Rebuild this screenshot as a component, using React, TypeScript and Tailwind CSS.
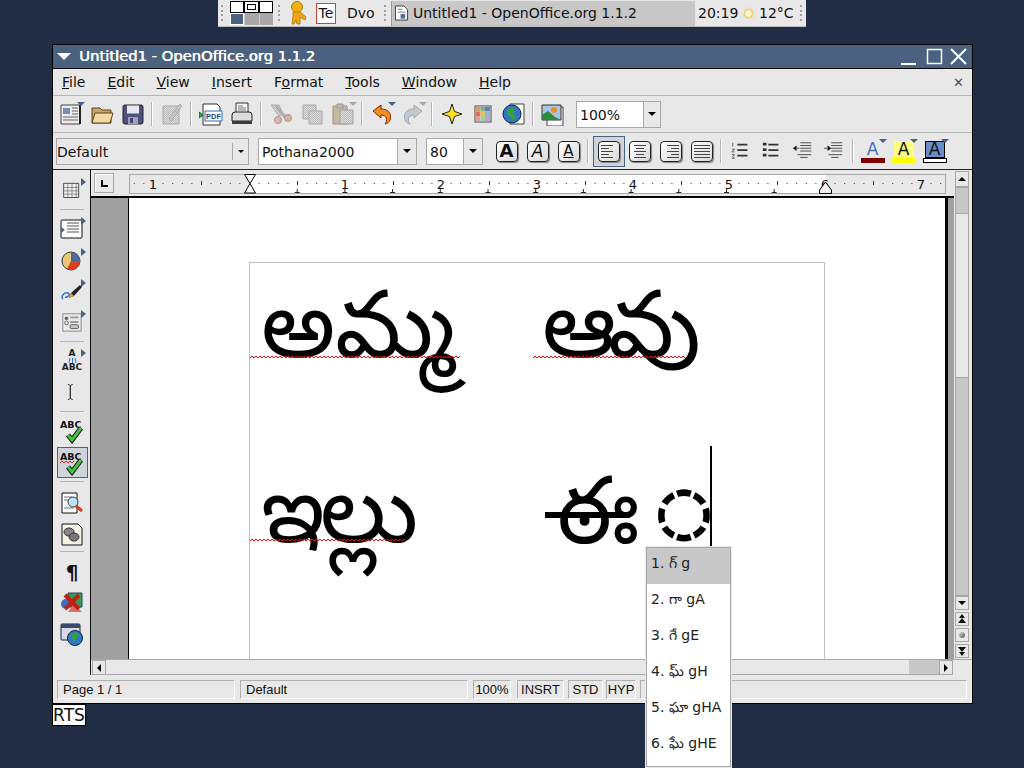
import type { ReactNode } from 'react';

const Sep = () => (
  <div className="w-2 h-6 flex justify-center shrink-0">
    <div className="w-[2px] h-full bg-[#b4b4b4] border-r border-white" />
  </div>
);

const Handle = ({ className = '' }: { className?: string }) => (
  <div className={`w-[5px] h-4 flex flex-col justify-between shrink-0 ${className}`}>
    {[0, 1, 2, 3].map(i => (
      <div key={i} className="w-0.5 h-0.5 bg-[#a0a0a0]" />
    ))}
  </div>
);

const Cell = ({ children, w = 'w-[31px]', h = 'h-[30px]' }: { children: ReactNode; w?: string; h?: string }) => (
  <div className={`${w} ${h} flex items-center justify-center relative shrink-0`}>{children}</div>
);

const Corner = ({ off }: { off?: boolean }) => (
  <div className={`absolute right-[1px] top-[3px] w-0 h-0 border-l-4 border-r-4 border-t-4 border-l-transparent border-r-transparent ${off ? 'border-t-[#a8a8a8]' : 'border-t-[#4a6180]'}`} />
);

const Side = () => (
  <div className="absolute right-[1px] top-1 w-0 h-0 border-t-4 border-b-4 border-l-[5px] border-t-transparent border-b-transparent border-l-[#4a6180]" />
);

const Icon = ({ children, size = 24 }: { children: ReactNode; size?: number }) => (
  <svg width={size} height={size} viewBox="0 0 24 24" fill="none">
    {children}
  </svg>
);

const NewDoc = () => (
  <Icon>
    <path d="M2 3h19v19H2z" fill="#ececec" stroke="#444" />
    <path d="M21 3v19" stroke="#222" strokeWidth="2" />
    <path d="M4 6h7v6H4z" fill="#7c8fb0" />
    <path d="M13 6h6M13 9h6M13 12h6M4 15h15M4 18h15" stroke="#666" />
  </Icon>
);
const Folder = () => (
  <Icon>
    <path d="M2 6h8l2 2h9v13H2z" fill="#c8a468" stroke="#5a4520" />
    <path d="M2 21l3-10h18l-3 10z" fill="#f3d8a4" stroke="#5a4520" />
  </Icon>
);
const Save = () => (
  <Icon>
    <rect x="2" y="3" width="20" height="19" rx="2" fill="#50507e" stroke="#222" />
    <path d="M6 3.500h12v8H6z" fill="#e8e8f0" />
    <path d="M7 15h10v7H7z" fill="#a0a0c4" />
    <path d="M9 16h3v5H9z" fill="#44446c" />
  </Icon>
);
const EditDoc = () => (
  <Icon>
    <path d="M3 4h16v18H3z" fill="url(#dither)" stroke="#aaa" />
    <path d="M9 17L20 2l2 2-11 15z" fill="#c8c8c8" stroke="#a8a8a8" />
  </Icon>
);
const Pdf = () => (
  <svg width="24" height="24" viewBox="0 0 24 24" fill="none">
    <path d="M4 2h14l3 3v18H4z" fill="#fff" stroke="#333" />
    <path d="M6 9h17v10H6z" fill="#fff" stroke="#2c6eb0" />
    <path d="M0 10l4 3-4 3z" fill="#2db52d" stroke="#156015" />
    <text x="7" y="17" fontSize="7.5" fontFamily="Liberation Sans" fontWeight="bold" fill="#24487c">PDF</text>
  </svg>
);
const Printer = () => (
  <Icon>
    <path d="M6 1h12v11H6z" fill="#f5f5f5" stroke="#333" />
    <path d="M8 4h5M8 6h8M8 8h8" stroke="#777" />
    <path d="M2 13q0-3 3-3h14q3 0 3 3v6H2z" fill="#dcdcdc" stroke="#222" />
    <path d="M2 19h20v3H2z" fill="#3c3c3c" />
  </Icon>
);
const Cut = () => (
  <Icon>
    <path d="M2 3h8l4 9-4 2z" fill="url(#dither)" stroke="#aaa" />
    <path d="M7 4l9 11" stroke="#b0b0b0" strokeWidth="3" />
    <circle cx="9" cy="18" r="3.500" fill="#d8b8b0" stroke="#b09088" />
    <circle cx="19" cy="16" r="3.500" fill="#d8b0a0" stroke="#b09088" />
  </Icon>
);
const Copy = () => (
  <Icon>
    <path d="M3 3h13v14H3z" fill="url(#dither)" stroke="#a8a8a8" />
    <path d="M9 9h13v13H9z" fill="url(#dither)" stroke="#a8a8a8" />
  </Icon>
);
const Paste = () => (
  <Icon>
    <path d="M2 4h14v18H2z" fill="#c8b8a0" stroke="#a09080" />
    <path d="M6 2h6v4H6z" fill="#bbb" stroke="#999" />
    <path d="M9 8h13v14H9z" fill="url(#dither)" stroke="#a0a0a0" />
  </Icon>
);
const Undo = () => (
  <Icon>
    <path d="M3 9l8-6v4c7 0 11 4 9 11-1 2-3 4-5 4 3-4 2-9-4-9v3z" fill="#f09020" stroke="#902000" />
  </Icon>
);
const Redo = () => (
  <Icon>
    <path d="M21 9l-8-6v4C6 7 2 11 4 18c1 2 3 4 5 4-3-4-2-9 4-9v3z" fill="#c0c8d0" stroke="#a0a8b0" />
  </Icon>
);
const Star = () => (
  <Icon>
    <path d="M12 2l2.500 7.500L22 12l-7.500 2.500L12 22l-2.500-7.500L2 12l7.500-2.500z" fill="#ffe020" stroke="#222" />
  </Icon>
);
const Palette = () => (
  <Icon>
    <rect x="4" y="4" width="16" height="16" fill="#fff" stroke="#444" />
    <path d="M5 5h4.500v4.500H5z" fill="#d0a060" />
    <path d="M9.500 5H14v4.500H9.500z" fill="#80b080" />
    <path d="M14 5h5v4.500h-5z" fill="#6080c0" />
    <path d="M5 9.500h4.500V14H5z" fill="#e07060" />
    <path d="M9.500 9.500H14V14H9.500z" fill="#e0c060" />
    <path d="M14 9.500h5V14h-5z" fill="#80c0d0" />
    <path d="M5 14h4.500v5H5z" fill="#e0a0a0" />
    <path d="M9.500 14H14v5H9.500z" fill="#a0d0a0" />
    <path d="M14 14h5v5h-5z" fill="#c0a0d0" />
  </Icon>
);
const Globe = () => (
  <Icon>
    <path d="M8 2h14v20H8z" fill="#fff" stroke="#444" />
    <circle cx="10" cy="12" r="9" fill="#2f78c8" stroke="#123" />
    <path d="M5 8l5-3 3 3-2 4 3 3-3 4-2-4-4-2z" fill="#38a038" />
  </Icon>
);
const Picture = () => (
  <Icon>
    <path d="M6 5h16v19H6z" fill="#fff" stroke="#444" />
    <path d="M1 3h19v15H1z" fill="#a8c4e8" stroke="#333" />
    <circle cx="13" cy="8" r="3" fill="#f09020" />
    <path d="M1 18v-5l6-4 7 6 6 3z" fill="#2e8a3a" />
  </Icon>
);

const Combo = ({ text, inputW, btnW = 'w-[19px]' }: { text: string; inputW: string; btnW?: string }) => (
  <div className="flex h-[27px] border border-[#a8a8a8] shrink-0">
    <div className={`${inputW} bg-white flex items-center pl-[3px] pt-[1px] text-[14px] text-[#111] leading-none`}>{text}</div>
    <div className={`${btnW} border-l border-[#a8a8a8] flex items-center justify-center bg-[#e8e8e8]`}>
      <div className="w-0 h-0 border-l-4 border-r-4 border-t-4 border-l-transparent border-r-transparent border-t-black" />
    </div>
  </div>
);

const FormatBtn = ({ children }: { children: ReactNode }) => (
  <div className="w-[31px] h-[30px] flex items-center justify-center shrink-0">
    <div className="w-[22px] h-[21px] rounded-sm border border-[#222] bg-gradient-to-br from-white to-[#d8d8d8] flex items-center justify-center shadow-[1px_1px_1px_#888]">
      {children}
    </div>
  </div>
);

const lines = {
  left: [12, 8, 12, 8, 12],
  center: [12, 8, 12, 8, 12],
  right: [12, 8, 12, 8, 12],
  full: [16, 16, 16, 16, 16],
};

const AlignLines = ({ kind }: { kind: 'left' | 'center' | 'right' | 'full' }) => (
  <div className={`w-4 flex flex-col gap-[2px] ${kind === 'left' ? 'items-start' : kind === 'right' ? 'items-end' : 'items-center'}`}>
    {lines[kind].map((w, i) => (
      <div key={i} className="h-px bg-[#444]" style={{ width: w }} />
    ))}
  </div>
);

const ListIcon = ({ kind }: { kind: 'num' | 'bullet' | 'out' | 'in' }) => (
  <Icon size={22}>
    {kind === 'num' && (
      <g>
        <path d="M3 3v4M2 10h3l-3 3h3M2 16h3l-2 2 2 2H2" stroke="#555" />
        <path d="M8 5h11M8 11h11M8 17h11" stroke="#333" strokeWidth="2" />
      </g>
    )}
    {kind === 'bullet' && (
      <g>
        <path d="M2 3h4v3H2zM2 9h4v3H2zM2 15h4v3H2z" fill="#333" />
        <path d="M8 5h11M8 11h11M8 17h11" stroke="#333" strokeWidth="2" />
      </g>
    )}
    {kind === 'out' && (
      <g>
        <path d="M1 9l4-3v6z" fill="#111" />
        <path d="M5 9h3M9 3h12M9 6h12M9 9h12M9 12h12M6 16h15M9 19h8" stroke="#444" />
      </g>
    )}
    {kind === 'in' && (
      <g>
        <path d="M9 9L5 6v6z" fill="#111" />
        <path d="M1 9h4M9 3h12M9 6h12M9 9h12M9 12h12M6 16h15M9 19h8" stroke="#444" />
      </g>
    )}
  </Icon>
);

const ColorA = ({ color, bg, bar }: { color: string; bg: string; bar: string }) => (
  <Cell>
    <Corner />
    <div className="w-[24px] h-[22px] mt-[2px] flex flex-col items-center">
      <div className={`w-[20px] h-[17px] flex items-center justify-center text-[17px] leading-none ${bg}`} style={{ color }}>
        A
      </div>
      <div className={`w-[24px] h-[5px] shrink-0 ${bar}`} />
    </div>
  </Cell>
);

const Ruler = () => {
  const dots = [];
  for (let k = -12; k <= 72; k++) {
    if (k % 5 === 0) continue;
    dots.push(<rect key={k} x={120 + k * 9.6} y={12} width={1} height={1} fill="#333" />);
  }
  const marks = [];
  for (let k = 1; k <= 11; k++) {
    marks.push(<path key={k} d={`M${120 + k * 47.7 - 2} 21.500h5M${120 + k * 47.7 + 0.5} 18v3`} stroke="#222" />);
  }
  const half = [];
  for (let k = -1; k <= 15; k += 2) {
    half.push(<rect key={k} x={120 + k * 48} y={10} width={1} height={4} fill="#333" />);
  }
  const nums = [
    [-1, '1'], [1, '1'], [2, '2'], [3, '3'], [4, '4'], [5, '5'], [6, '6'], [7, '7'],
  ] as [number, string][];
  return (
    <svg width="820" height="25" viewBox="0 0 820 25" fill="none" className="shrink-0">
      <rect x="0.500" y="3.500" width="816" height="19" fill="#e8e8e8" stroke="#a8a8a8" />
      <rect x="121" y="4" width="576" height="18" fill="#fff" />
      {dots}
      {half}
      {marks}
      {nums.map(([n, t]) => (
        <text key={n} x={120 + n * 96} y={17.5} fontSize="13" fontFamily="DejaVu Sans" fill="#111" textAnchor="middle">
          {t}
        </text>
      ))}
      <path d="M115.500 3.500h11l-5.500 9 5.500 9.500h-11l5.500-9.500z" fill="#fff" stroke="#000" />
      <path d="M696.500 11l6 8v3.500h-12V19z" fill="#f0f0f0" stroke="#000" />
    </svg>
  );
};

const Arrow = ({ dir }: { dir: 'up' | 'down' | 'left' | 'right' }) => {
  const cls = {
    up: 'border-l-4 border-r-4 border-b-4 border-l-transparent border-r-transparent border-b-black',
    down: 'border-l-4 border-r-4 border-t-4 border-l-transparent border-r-transparent border-t-black',
    left: 'border-t-4 border-b-4 border-r-4 border-t-transparent border-b-transparent border-r-black',
    right: 'border-t-4 border-b-4 border-l-4 border-t-transparent border-b-transparent border-l-black',
  }[dir];
  return <div className={`w-0 h-0 ${cls}`} />;
};

const SpellIcon = ({ wavy }: { wavy?: boolean }) => (
  <svg width="26" height="26" viewBox="0 0 26 26" fill="none">
    <text x="1" y="10" fontSize="9.5" fontWeight="bold" fontFamily="DejaVu Sans" fill="#111">ABC</text>
    {wavy && <path d="M1 13l2-2 2 2 2-2 2 2 2-2 2 2 2-2" stroke="#d02020" />}
    <path d="M9 17l4 5L22 10" stroke="#111" strokeWidth="5" />
    <path d="M9 17l4 5L22 10" stroke="#48c040" strokeWidth="3" />
  </svg>
);

const Rule = ({ m }: { m: string }) => <div className={`w-6 h-px bg-[#b4b4b4] shrink-0 ${m}`} />;

const Tool = ({ children, more }: { children: ReactNode; more?: boolean }) => (
  <Cell w="w-[30px]" h="h-[31px]">
    {more && <Side />}
    {children}
  </Cell>
);

const SideIcons = () => (
  <div className="w-[38px] shrink-0 flex flex-col items-center border-r border-[#111] pt-[4px] pl-[1px] bg-[#e8e8e8]">
    <Tool more>
      <Icon size={20}>
        <path d="M2 4h18v17H2z" fill="#f0f0f0" stroke="#333" />
        <path d="M2 9h18M2 13h18M2 17h18M7 4v17M12 4v17M17 4v17" stroke="#555" strokeWidth="0.700" />
      </Icon>
    </Tool>
    <Rule m="mt-[4px] mb-[3px]" />
    <Tool more>
      <Icon>
        <rect x="1" y="3" width="21" height="18" rx="1" fill="#fff" stroke="#111" />
        <path d="M7 6h12M7 9h12M7 12h12M7 15h12" stroke="#555" />
        <path d="M1 10l4 3-4 3z" fill="#4a6180" />
      </Icon>
    </Tool>
    <Tool more>
      <Icon>
        <circle cx="11" cy="13" r="9" fill="#e8c878" stroke="#333" />
        <path d="M11 13V4a9 9 0 0 1 9 9z" fill="#4a6a9a" />
        <path d="M11 13h9a9 9 0 0 1-13 8z" fill="#d84020" />
      </Icon>
    </Tool>
    <Tool more>
      <Icon>
        <path d="M3 20c-3-3 2-7 5-6s0 5-3 4" stroke="#3070d0" strokeWidth="1.500" />
        <path d="M9 19l2-5L20 6l2 2-8 9z" fill="#222" />
        <path d="M9 19l2-5 3 3z" fill="#e0a030" />
      </Icon>
    </Tool>
    <Tool more>
      <Icon size={22}>
        <path d="M2 3h20v19H2z" fill="#e8e8e8" stroke="#888" />
        <circle cx="6" cy="8" r="2" fill="#667" />
        <circle cx="6" cy="13" r="2" fill="#fff" stroke="#555" />
        <path d="M10 7h9M10 12h9" stroke="#999" strokeWidth="2" />
        <rect x="10" y="15" width="9" height="4" rx="1" fill="#ccc" stroke="#555" />
      </Icon>
    </Tool>
    <Rule m="mt-[4px] mb-[3px]" />
    <Tool more>
      <div className="flex flex-col items-center font-bold leading-none text-[#222]">
        <span className="text-[9px]">A</span>
        <div className="flex gap-[2px] h-[5px]">
          <div className="w-px h-full bg-[#3070d0] rotate-12" />
          <div className="w-px h-full bg-[#3070d0]" />
          <div className="w-px h-full bg-[#3070d0] -rotate-12" />
        </div>
        <span className="text-[9px]">ABC</span>
      </div>
    </Tool>
    <Tool>
      <Icon size={20}>
        <path d="M7 3q3 0 3 2v14q0 2-3 2M13 3q-3 0-3 2v14q0 2 3 2" stroke="#222" />
      </Icon>
    </Tool>
    <Rule m="mt-[4px] mb-[3px]" />
    <Tool>
      <SpellIcon />
    </Tool>
    <div className="w-[31px] h-[31px] mt-px flex items-center justify-center border border-[#4a6180] bg-[#d0d4dc] shrink-0">
      <SpellIcon wavy />
    </div>
    <Rule m="mt-[3px] mb-[5px]" />
    <Tool>
      <Icon>
        <path d="M2 2h15v20H2z" fill="#fff" stroke="#111" />
        <path d="M4 6h8M4 9h6M4 17h10" stroke="#777" />
        <circle cx="13" cy="11" r="5" fill="#bfe0f8" stroke="#345" />
        <path d="M16 15l6 5" stroke="#d84020" strokeWidth="3" />
      </Icon>
    </Tool>
    <Tool>
      <Icon>
        <path d="M2 2h16l4 4v17H2z" fill="#f8f4e8" stroke="#111" />
        <ellipse cx="9" cy="10" rx="5" ry="4" fill="#888" stroke="#333" />
        <ellipse cx="14" cy="15" rx="5" ry="4" fill="#777" stroke="#333" />
      </Icon>
    </Tool>
    <Rule m="mt-[2px] mb-[4px]" />
    <Tool>
      <span className="text-[20px] font-bold leading-none text-[#111]">¶</span>
    </Tool>
    <Tool>
      <Icon>
        <path d="M8 2h14v14H8z" fill="#3c9a50" stroke="#246" />
        <path d="M8 21l6-8 8 8z" fill="#d87060" />
        <circle cx="6" cy="13" r="5" fill="#3a70c0" />
        <path d="M5 4l14 14M19 4L5 18" stroke="#c02018" strokeWidth="4" />
      </Icon>
    </Tool>
    <Tool>
      <Icon>
        <rect x="1" y="2" width="19" height="16" rx="1" fill="#d8d8e8" stroke="#223" />
        <path d="M1 2h19v4H1z" fill="#3a4a70" />
        <circle cx="15" cy="16" r="7.500" fill="#2f78c8" stroke="#123" />
        <path d="M11 13l5-3 3 3-3 4-2 3-2-4z" fill="#38a038" />
      </Icon>
    </Tool>
  </div>
);

const StatusField = ({ children, w, m, center }: { children?: ReactNode; w: string; m: string; center?: boolean }) => (
  <div className={`${w} ${m} h-[19px] shrink-0 border-t border-l border-[#b0b0b0] border-r border-r-white border-b border-b-white flex items-center text-[13px] leading-none text-[#111] overflow-hidden font-['Liberation_Sans',sans-serif] ${center ? 'justify-center' : 'pl-[5px]'}`}>
    {children}
  </div>
);

const SmallBtn = ({ children, h = 'h-[14px]' }: { children: ReactNode; h?: string }) => (
  <div className={`w-[14px] ${h} shrink-0 border border-[#a8a8a8] bg-[#e8e8e8] flex items-center justify-center`}>{children}</div>
);

const PageArrows = ({ down }: { down?: boolean }) => (
  <svg width="8" height="10" viewBox="0 0 8 10" fill="#111" className={down ? 'rotate-180' : ''}>
    <path d="M4 0l3 4H1zM4 4l4 5H0z" />
  </svg>
);

const Menu = ({ k, rest, pre = '' }: { k: string; rest: string; pre?: string }) => (
  <span>
    {pre}
    <u>{k}</u>
    {rest}
  </span>
);

const Squiggle = ({ width, className }: { width: number; className: string }) => {
  let d = 'M0 3';
  for (let x = 2; x <= width; x += 2) d += `L${x} ${x % 4 === 0 ? 3 : 1}`;
  return (
    <svg width={width} height="4" viewBox={`0 0 ${width} 4`} fill="none" className={`absolute ${className}`}>
      <path d={d} stroke="#ff0000" />
    </svg>
  );
};

const candidates = ['1. గ్ g', '2. గా gA', '3. గే gE', '4. ఘ్ gH', '5. ఘా gHA', '6. ఘే gHE'];

export default function App() {
  return (
    <div className="w-[1024px] h-[768px] relative overflow-hidden bg-[#212d45] font-['DejaVu_Sans','Noto_Sans',sans-serif] flex flex-col items-center">
      <svg width="0" height="0" className="absolute">
        <defs>
          <pattern id="dither" width="2" height="2" patternUnits="userSpaceOnUse">
            <rect width="2" height="2" fill="#e0e0e0" />
            <rect width="1" height="1" fill="#b8b8b8" />
            <rect x="1" y="1" width="1" height="1" fill="#b8b8b8" />
          </pattern>
        </defs>
      </svg>

      {/* panel */}
      <div className="w-[588px] h-[27px] shrink-0 bg-[#e8e8e8] flex items-center pl-[3px] text-[14px] text-[#111] leading-none border-b border-[#bbb]">
        <Handle />
        <div className="w-[43px] h-[24px] ml-[4px] grid grid-cols-3 grid-rows-2 bg-[#a8a8a8]">
          <div className="border border-black bg-white" />
          <div className="border border-black bg-white p-[2px]">
            <div className="h-full border border-black" />
          </div>
          <div className="border border-black bg-white" />
          <div className="border border-white bg-[#4a6180]" />
          <div className="bg-[#a8a8a8] border-l border-[#ccc]" />
          <div className="bg-[#a8a8a8] border-l border-[#ccc]" />
        </div>
        <Handle className="ml-[5px]" />
        <svg width="17" height="24" viewBox="0 0 17 24" fill="none" className="ml-[7px]">
          <circle cx="7" cy="6" r="5.500" fill="#f5b010" stroke="#b07808" />
          <path d="M3 11h7l6 5-1 3-5-3v7H7l-1-4-2 4H2l1-7z" fill="#f0a810" stroke="#b88010" />
        </svg>
        <div className="w-[20px] h-[21px] ml-[9px] border border-[#d04040] bg-white flex items-center justify-center">Te</div>
        <div className="w-[28px] ml-[11px]">Dvo</div>
        <Handle className="ml-[9px] mr-[2px]" />
        <div className="w-[304px] h-[25px] bg-[#c8c8c8] flex items-center pl-[2px] gap-[4px] border-l border-[#999]">
          <svg width="15" height="18" viewBox="0 0 16 18" fill="none">
            <path d="M1.500 1.500h9l4 4v11h-13z" fill="#fff" stroke="#333" />
            <path d="M4 5h5M4 8h8" stroke="#777" />
            <path d="M7 10h5v5H7z" fill="#5a6a90" />
          </svg>
          <span>Untitled1 - OpenOffice.org 1.1.2</span>
        </div>
        <span className="ml-[3px] w-[39px]">20:19</span>
        <div className="w-[9px] h-[9px] rounded-full bg-[#fff8d8] border border-[#f0c850] shadow-[0_0_3px_#f0c850] ml-[7px] mr-[6px]" />
        <span className="w-[35px]">12°C</span>
        <Handle className="ml-[6px]" />
      </div>

      {/* window */}
      <div className="absolute left-[52px] top-[44px] w-[921px] h-[660px] border border-black bg-[#e8e8e8] flex flex-col text-[#111]">
        <div className="h-[24px] shrink-0 bg-[#4a6180] border-b border-black flex items-center pl-[4px] text-white text-[14.75px] [text-shadow:0.6px_0_0_#fff] leading-none">
          <div className="w-0 h-0 border-l-[7px] border-r-[7px] border-t-[7px] border-l-transparent border-r-transparent border-t-white" />
          <span className="ml-[8px] flex-1">Untitled1 - OpenOffice.org 1.1.2</span>
          <svg width="68" height="20" viewBox="0 0 68 20" fill="none" className="mr-[3px]">
            <path d="M0 17h15" stroke="#fff" strokeWidth="2" />
            <rect x="26.500" y="2.500" width="14" height="14" stroke="#fff" strokeWidth="1.500" />
            <path d="M50 2l15 15M65 2L50 17" stroke="#fff" strokeWidth="2" />
          </svg>
        </div>
        <div className="h-[27px] shrink-0 border-b border-[#b4b4b4] flex items-center text-[14px] leading-none pl-[9px] gap-[22px] pr-[8px]">
          <Menu k="F" rest="ile" />
          <Menu k="E" rest="dit" />
          <Menu k="V" rest="iew" />
          <Menu k="I" rest="nsert" />
          <Menu pre="F" k="o" rest="rmat" />
          <Menu k="T" rest="ools" />
          <Menu k="W" rest="indow" />
          <Menu k="H" rest="elp" />
          <div className="flex-1" />
          <span className="text-[#54485c] font-bold text-[13px]">✕</span>
        </div>
        <div className="h-[37px] shrink-0 border-b border-[#b4b4b4] flex items-center pl-[2px]">
          <Cell><Corner /><NewDoc /></Cell>
          <Cell><Folder /></Cell>
          <Cell><Save /></Cell>
          <Sep />
          <Cell><EditDoc /></Cell>
          <Sep />
          <Cell><Pdf /></Cell>
          <Cell><Printer /></Cell>
          <Sep />
          <Cell><Cut /></Cell>
          <Cell><Copy /></Cell>
          <Cell><Corner off /><Paste /></Cell>
          <Sep />
          <Cell><Corner /><Undo /></Cell>
          <Cell><Corner off /><Redo /></Cell>
          <Sep />
          <Cell><Star /></Cell>
          <Cell><Palette /></Cell>
          <Cell><Globe /></Cell>
          <Sep />
          <Cell><Picture /></Cell>
          <div className="w-[8px]" />
          <Combo text="100%" inputW="w-[66px]" btnW="w-[17px]" />
        </div>
        <div className="h-[37px] shrink-0 border-b border-[#222] flex items-center pl-[3px]">
          <div className="w-[193px] mr-[9px] h-[27px] flex items-center border border-[#a8a8a8] shrink-0">
            <span className="flex-1 text-[14px] leading-none pt-[2px]">Default</span>
            <div className="w-[16px] h-[17px] border-l border-[#a8a8a8] flex items-center justify-center">
              <div className="w-0 h-0 border-l-[3px] border-r-[3px] border-t-[3px] border-l-transparent border-r-transparent border-t-black" />
            </div>
          </div>
          <Combo text="Pothana2000" inputW="w-[138px]" />
          <div className="w-[9px]" />
          <Combo text="80" inputW="w-[36px]" />
          <div className="w-[8px]" />
          <FormatBtn><span className="text-[18px] font-bold leading-none">A</span></FormatBtn>
          <FormatBtn><span className="text-[17px] italic leading-none">A</span></FormatBtn>
          <FormatBtn><span className="text-[15px] leading-none underline">A</span></FormatBtn>
          <Sep />
          <div className="w-[32px] h-[31px] ml-px -mr-px border border-[#4a6180] bg-[#d0d4dc] flex items-center justify-center shrink-0">
            <div className="w-[22px] h-[21px] rounded-sm border border-[#222] bg-gradient-to-br from-white to-[#d8d8d8] flex items-center justify-center shadow-[1px_1px_1px_#888]">
              <AlignLines kind="left" />
            </div>
          </div>
          <FormatBtn><AlignLines kind="center" /></FormatBtn>
          <FormatBtn><AlignLines kind="right" /></FormatBtn>
          <FormatBtn><AlignLines kind="full" /></FormatBtn>
          <Sep />
          <Cell><ListIcon kind="num" /></Cell>
          <Cell><ListIcon kind="bullet" /></Cell>
          <Cell><ListIcon kind="out" /></Cell>
          <Cell><ListIcon kind="in" /></Cell>
          <Sep />
          <ColorA color="#3f6fc0" bg="" bar="bg-[#800000]" />
          <ColorA color="#111" bg="bg-[#ffff80]" bar="bg-[#ffff00]" />
          <ColorA color="#111" bg="bg-[#6a8cc8] border border-black" bar="bg-white border border-black" />
        </div>

        <div className="flex-1 flex min-h-0">
          <SideIcons />
          <div className="flex-1 flex flex-col min-w-0">
            <div className="flex-1 flex min-h-0">
              <div className="flex-1 flex flex-col min-w-0">
                <div className="h-[28px] shrink-0 flex items-center pl-[3px] border-b-2 border-black">
                  <div className="w-[20px] h-[20px] border border-[#a8a8a8] shadow-[inset_1px_1px_0_#fff] flex items-center justify-center mr-[15px] shrink-0">
                    <div className="w-[7px] h-[7px] border-l-2 border-b-2 border-black" />
                  </div>
                  <Ruler />
                </div>
                <div className="flex-1 flex min-h-0 bg-[#a0a0a0]">
                  <div className="w-[37px] shrink-0" />
                  <div className="flex-1 min-w-0 bg-white border-l border-black border-r-[3px] border-r-black pl-[120px] pt-[64px] overflow-hidden">
                    <div className="w-[576px] h-[500px] border border-[#c0c0c0] relative text-black text-[93px] leading-[185px]">
                      <Squiggle width={211} className="left-0 top-[92px]" />
                      <Squiggle width={153} className="left-[283px] top-[92px]" />
                      <Squiggle width={157} className="left-0 top-[275px]" />
                      <div className="grid grid-cols-[284px_284px] pl-[11px] -mt-[30px]">
                        <span>అమ్మ</span>
                        <span className="-ml-[3px] tracking-[-8px]">ఆవు</span>
                        <span className="tracking-[-5px]">ఇల్లు</span>
                        <span className="whitespace-nowrap">
                          <span className="ml-[12px] align-[6px] tracking-[7px]">ఠః</span>
                          <span className="ml-[9px] text-[64px] font-bold align-[17px] [-webkit-text-stroke:3px_black]">◌</span>
                        </span>
                      </div>
                      <div className="absolute left-[295px] top-[249px] w-[85px] h-[6px] bg-black" />
                      <div className="absolute left-[460px] top-[183px] w-[2px] h-[101px] bg-black" />
                    </div>
                  </div>
                  <div className="w-[6px] shrink-0" />
                </div>
              </div>
              <div className="w-[18px] shrink-0 flex flex-col items-start pl-[1px] pt-[1px] bg-[#e8e8e8]">
                <SmallBtn h="h-[16px]"><Arrow dir="up" /></SmallBtn>
                <div className="w-[14px] h-[27px] bg-[#c8c8c8] border border-[#a8a8a8] shrink-0" />
                <div className="w-[14px] h-[163px] bg-[#e8e8e8] border-x border-[#a8a8a8] shrink-0" />
                <div className="w-[14px] h-[219px] bg-[#c8c8c8] border border-[#a8a8a8] shrink-0" />
                <SmallBtn><Arrow dir="down" /></SmallBtn>
                <div className="h-[2px]" />
                <SmallBtn><PageArrows /></SmallBtn>
                <div className="h-[2px]" />
                <SmallBtn><div className="w-[6px] h-[6px] rounded-full bg-gradient-to-br from-[#ddd] to-[#555]" /></SmallBtn>
                <div className="h-[2px]" />
                <SmallBtn><PageArrows down /></SmallBtn>
              </div>
            </div>
            <div className="h-[15px] shrink-0 flex border-t border-[#a8a8a8] pr-[19px] pl-px box-content">
              <SmallBtn h="h-[15px]"><Arrow dir="left" /></SmallBtn>
              <div className="flex-1 border-b border-[#a8a8a8]" />
              <div className="w-[30px] bg-[#c8c8c8] border-b border-[#a8a8a8]" />
              <SmallBtn h="h-[15px]"><Arrow dir="right" /></SmallBtn>
            </div>
          </div>
        </div>

        <div className="h-[28px] shrink-0 flex items-center pl-[4px] pr-[5px] border-t border-[#e8e8e8]">
          <StatusField w="w-[178px]" m="">Page 1 / 1</StatusField>
          <StatusField w="w-[228px]" m="ml-[5px]">Default</StatusField>
          <StatusField w="w-[38px]" m="ml-[5px]" center>100%</StatusField>
          <StatusField w="w-[47px]" m="ml-[6px]" center>INSRT</StatusField>
          <StatusField w="w-[35px]" m="ml-[4px]" center>STD</StatusField>
          <StatusField w="w-[30px]" m="ml-[3px]" center>HYP</StatusField>
          <div className="flex-1 ml-[4px] h-[19px] border-t border-l border-[#b0b0b0] border-r border-r-white border-b border-b-white" />
        </div>
      </div>

      {/* RTS status */}
      <div className="absolute left-[52px] top-[704px] w-[34px] h-[22px] bg-white border border-black flex items-center justify-center text-[17px] leading-none text-[#111]">
        RTS
      </div>

      {/* lookup table */}
      <div className="absolute left-[645px] top-[546px] w-[87px] h-[222px] bg-white border-2 border-[#e8e8e8] outline outline-1 -outline-offset-2 outline-[#a8a8a8] flex flex-col text-[14px] text-[#222] leading-none">
        {candidates.map((c, i) => (
          <div key={c} className={`h-[36px] shrink-0 flex items-center pl-[4px] pb-[7px] whitespace-nowrap ${i === 0 ? 'bg-[#c8c8c8]' : ''}`}>
            {c}
          </div>
        ))}
      </div>
    </div>
  );
}
